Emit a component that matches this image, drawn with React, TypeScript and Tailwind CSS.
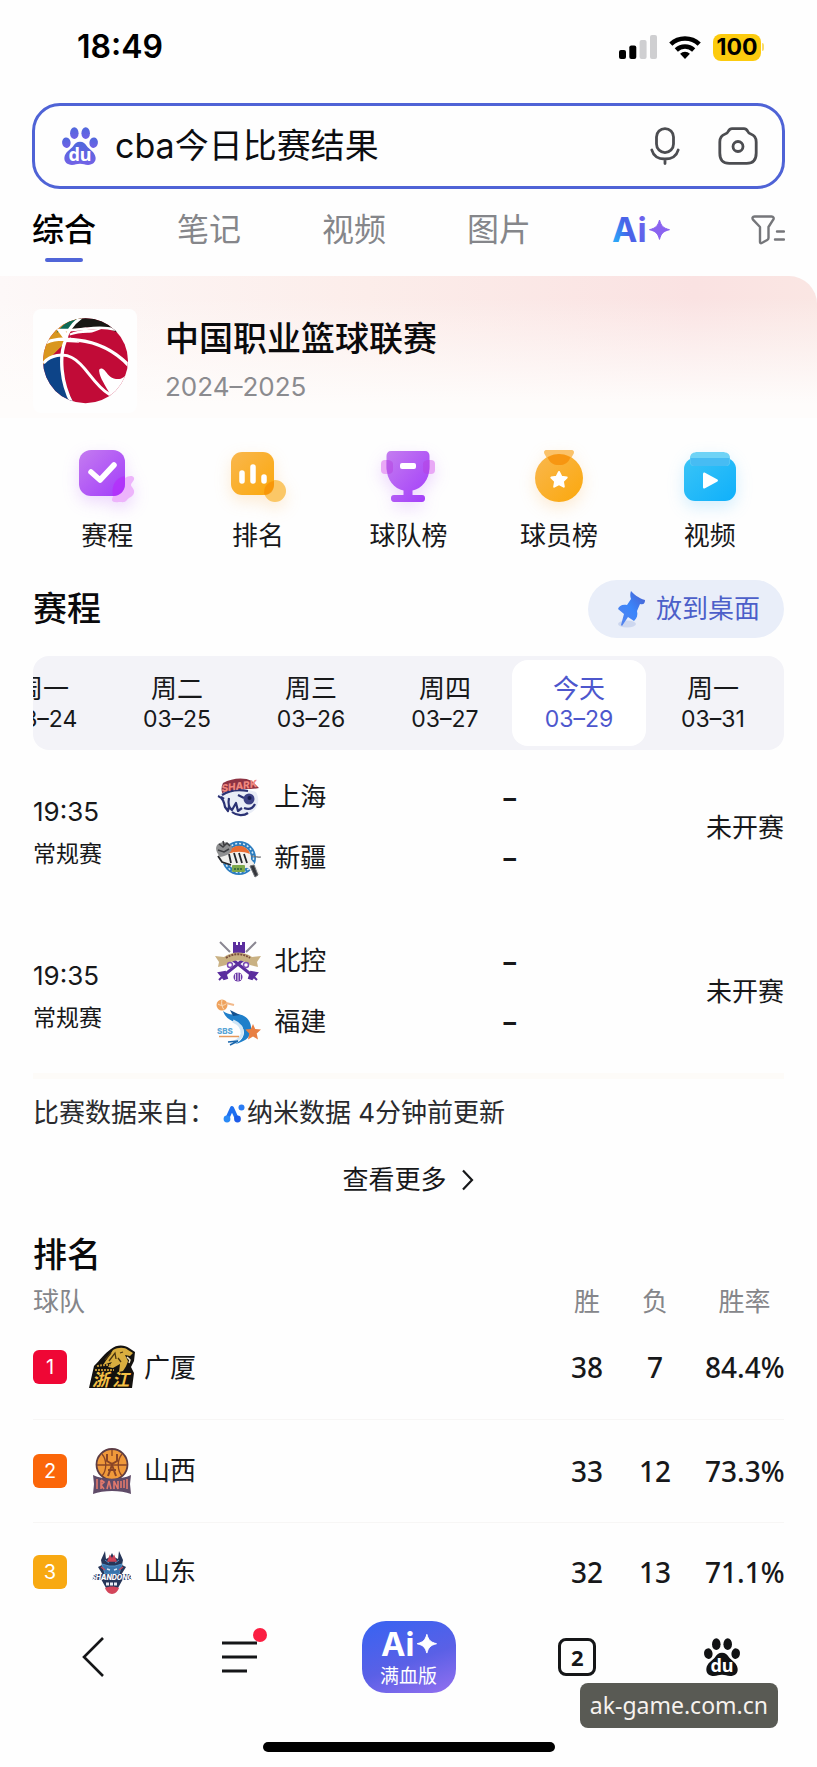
import type { ReactNode } from "react";

const cjk = "font-['Inter','Noto_Sans_CJK_SC',sans-serif]";

/* ---------- shared marks ---------- */

function Paw({ tone, className }: { tone: "color" | "dark"; className: string }) {
  const fill = tone === "color" ? "url(#pawFill)" : "#111214";
  return (
    <svg viewBox="0 0 38 40" className={`overflow-visible ${className}`} aria-hidden="true">
      <defs>
        <linearGradient id="pawFill" x1="0" y1="0" x2="0" y2="1">
          <stop offset="0" stopColor="#4f68dc" />
          <stop offset="1" stopColor="#7262e6" />
        </linearGradient>
      </defs>
      <g fill={fill}>
        <ellipse cx="13" cy="6.500" rx="4.500" ry="6.200" />
        <ellipse cx="25" cy="6.500" rx="4.500" ry="6.200" />
        <ellipse cx="4.600" cy="16.500" rx="4.500" ry="5.600" transform="rotate(-8 4.600 16.500)" />
        <ellipse cx="33.400" cy="16.500" rx="4.500" ry="5.600" transform="rotate(8 33.400 16.500)" />
        <path d="M19 15.500c3.500 0 5.500 2 7.500 5s8.500 5.500 9 12c.3 4.500-3 7.500-8 7.500-3.500 0-5-1.200-8.500-1.200S14 40 10.500 40c-5 0-8.300-3-8-7.500.5-6.500 7-9 9-12s4-5 7.500-5z" />
      </g>
      <text x="19" y="36" textAnchor="middle" fontSize="19" fontWeight="700" fill="#fff" fontFamily="Noto Sans">
        du
      </text>
    </svg>
  );
}

function AiMark({ light, className }: { light?: boolean; className: string }) {
  const fill = light ? "#fff" : "url(#aiFill)";
  return (
    <svg viewBox="0 0 58 30" className={`overflow-visible ${className}`} role="img" aria-label="Ai+">
      <defs>
        <linearGradient id="aiFill" gradientUnits="userSpaceOnUse" x1="0" y1="26" x2="56" y2="6">
          <stop offset="0" stopColor="#25b4fb" />
          <stop offset="0.3" stopColor="#4763e8" />
          <stop offset="1" stopColor="#9a63f2" />
        </linearGradient>
      </defs>
      <text x="0" y="27" fontSize="34" fontWeight="700" fontFamily="Inter" fill={fill}>
        Ai
      </text>
      <path d="M47.500 5c1.700 6 3.500 8 10 9.700-6.500 1.700-8.300 3.700-10 9.700-1.700-6-3.500-8-10-9.700 6.500-1.700 8.300-3.700 10-9.700z" fill={light ? "#fff" : "#8a63f0"} stroke={light ? "#fff" : "#8a63f0"} strokeLinejoin="round" />
    </svg>
  );
}

/* ---------- status bar ---------- */

function StatusBar() {
  return (
    <div className="flex items-center justify-between pt-[27px] pl-[77px] pr-[53px]">
      <span className="text-[32px] font-semibold leading-10 text-black">18:49</span>
      <div className="flex items-center gap-3">
        <svg viewBox="0 0 38 24" className="h-6 w-[38px]" aria-hidden="true">
          <rect x="0" y="15" width="7" height="9" rx="2" />
          <rect x="10.300" y="10.500" width="7" height="13.500" rx="2" />
          <rect x="20.600" y="5" width="7" height="19" rx="2" fill="#cfcfd1" />
          <rect x="31" y="0" width="7" height="24" rx="2" fill="#cfcfd1" />
        </svg>
        <svg viewBox="0 0 32 24" className="h-6 w-8" aria-hidden="true">
          <g fill="none" stroke="#000" strokeWidth="4.600">
            <path d="M1.800 9.200a20.500 20.500 0 0 1 28.400 0" />
            <path d="M7.300 15a12.600 12.600 0 0 1 17.400 0" />
          </g>
          <path d="M16 24l-4.900-5.200a7 7 0 0 1 9.800 0z" />
        </svg>
        <div className="flex items-center gap-px">
          <span className="flex h-[27px] w-12 items-center justify-center rounded-lg bg-[#fccb0e] text-[23px] font-bold leading-7 text-black">
            100
          </span>
          <span className="h-2 w-0.5 rounded-r bg-[#fbdc6a]" />
        </div>
      </div>
    </div>
  );
}

/* ---------- search ---------- */

function SearchBar() {
  return (
    <form className="mx-8 mt-9 flex items-center rounded-[28px] border-[3px] border-[#4f63d6] py-5 pl-[27px] pr-6">
      <Paw tone="color" className="h-[38px] w-9" />
      <input
        aria-label="搜索"
        defaultValue="cba今日比赛结果"
        className="ml-[17px] h-10 min-w-0 flex-1 bg-transparent text-[34px] leading-10 text-[#0c0d10] outline-none"
      />
      <button type="button" aria-label="语音搜索" className="mr-[38px]">
        <svg viewBox="0 0 30 38" className="h-[38px] w-[30px]" fill="none" stroke="#4c4d51" strokeWidth="2.800" strokeLinecap="round">
          <rect x="6.500" y="1.600" width="17" height="24" rx="8.500" />
          <path d="M1.800 23c1.500 5.500 6.200 9 13.200 9s11.700-3.500 13.200-9M15 32v4.500" />
        </svg>
      </button>
      <button type="button" aria-label="拍照搜索">
        <svg viewBox="0 0 40 38" className="h-[38px] w-10" fill="none" stroke="#4c4d51" strokeWidth="2.800" strokeLinejoin="round">
          <path d="M14 1.600h12c2 0 2.700.8 3.500 2.400.8 1.800 1.500 2.400 3.300 3C37 8.400 38.200 11 38.200 15v11c0 7-3 10.400-9.500 10.400H11.300C4.800 36.400 1.800 33 1.800 26V15c0-4 1.200-6.600 5.400-8 1.800-.6 2.500-1.200 3.300-3 .8-1.600 1.500-2.400 3.500-2.400z" />
          <circle cx="20" cy="19.500" r="5" />
        </svg>
      </button>
    </form>
  );
}

function Tabs() {
  return (
    <nav className="flex items-start justify-between px-8 pt-[17px] pb-3.5 text-[32px] leading-[48px] text-[#85868a]">
      <a href="#all" className="flex flex-col items-center gap-1 font-medium text-black">
        综合
        <span className="h-1 w-[38px] rounded-full bg-[#5065d8]" />
      </a>
      <a href="#notes">笔记</a>
      <a href="#video">视频</a>
      <a href="#image">图片</a>
      <a href="#ai" className="flex h-12 items-center">
        <AiMark className="h-[30px] w-[58px]" />
      </a>
      <button type="button" aria-label="筛选" className="flex h-12 items-center">
        <svg viewBox="0 0 34 30" className="h-[30px] w-[34px]" fill="none" stroke="#75767a" strokeWidth="2.400" strokeLinejoin="round" strokeLinecap="round">
          <path d="M3.500 1.500h17c2 0 2.700 1.800 1.700 3.200L17.500 12v11c0 1-.5 1.600-1.300 2l-5.500 3c-1 .5-1.700 0-1.700-1V12L2 4.700C1 3.200 1.500 1.500 3.500 1.500z" />
          <path d="M26 16.500h7M24 24.500h9" />
        </svg>
      </button>
    </nav>
  );
}

/* ---------- league banner ---------- */

function LeagueBall() {
  return (
    <svg viewBox="0 0 254 257" className="h-[86px] w-[85px]" aria-hidden="true">
      <defs>
        <clipPath id="ball">
          <circle cx="127" cy="128" r="127" />
        </clipPath>
      </defs>
      <g clipPath="url(#ball)">
        <rect width="254" height="257" fill="#c10b37" />
        <path d="M0 0h120L72 52 68 72 0 140z" fill="#d9961f" />
        <path d="M40 44C60 18 80 4 114 0L84 34 60 36z" fill="#0e6a56" />
        <path d="M110 0h90l24 44C180 22 130 26 84 36z" fill="#191815" />
        <path d="M0 140C20 116 40 108 58 110c0 60 14 110 36 150H0z" fill="#0d4488" />
        <g fill="none" stroke="#fff" strokeLinecap="round">
          <path d="M112 0C84 20 72 40 66 70 50 110 50 190 90 262" strokeWidth="10" />
          <path d="M-4 80C30 60 60 62 104 66c70 8 116 36 156 80" strokeWidth="10" />
          <path d="M4 132c18-20 56-28 82-14 44 22 60 78 112 110" strokeWidth="9" />
          <path d="M52 36c30 2 54-2 78-4 30-4 60-4 84 2" strokeWidth="8" />
        </g>
        <path d="M80 46c30-12 66-12 96-14-18 6-30 14-42 12-20 0-40 4-54 8zM66 72l44 2-28-16zM70 40L36 28l30 40z" fill="#fff" />
        <path d="M258 148C250 175 235 185 218 182c-18-2-26-17-34-26-8-8-18-6-16 4 2 20 18 40 32 68l60 32z" fill="#fff" />
      </g>
    </svg>
  );
}

function LeagueBanner() {
  return (
    <section className="flex items-center gap-7 rounded-tr-[28px] bg-[linear-gradient(to_bottom,rgba(254,252,251,0)_15%,#fefcfb_90%),linear-gradient(to_right,#fdf8f8,#fcedea_45%,#fae2e2_85%,#fae6e3)] px-[33px] pt-[33px] pb-[5px]">
      <div className="flex size-[104px] shrink-0 items-center justify-center rounded-lg bg-[#fefefe]">
        <LeagueBall />
      </div>
      <div className="flex flex-col gap-2">
        <h1 className="text-[34px] font-medium leading-[44px] text-[#0a0a0c]">中国职业篮球联赛</h1>
        <p className="text-[26px] leading-9 text-[#8b8b8f]">2024–2025</p>
      </div>
    </section>
  );
}

/* ---------- shortcuts ---------- */

function Gradients() {
  return (
    <defs>
      <linearGradient id="gPurple" x1="0" y1="0" x2="1" y2="1">
        <stop offset="0" stopColor="#c47cf0" />
        <stop offset="1" stopColor="#a23cfa" />
      </linearGradient>
      <linearGradient id="gOrange" x1="0" y1="0" x2="1" y2="1">
        <stop offset="0" stopColor="#f9b74e" />
        <stop offset="1" stopColor="#fba80c" />
      </linearGradient>
      <linearGradient id="gBlue" x1="0" y1="0" x2="1" y2="1">
        <stop offset="0" stopColor="#3ac4f6" />
        <stop offset="1" stopColor="#0fb0fb" />
      </linearGradient>
    </defs>
  );
}

const shortcuts: { label: string; glow: string; art: ReactNode }[] = [
  {
    label: "赛程",
    glow: "drop-shadow-[0_6px_8px_rgba(176,80,250,0.22)]",
    art: (
      <>
        <path d="M50 40c3-2 8-3 9 0 1 2-3 5-3 7s4 4 3 8-5 4-7 7-5 2-7 2-8 1-8-2 5-14 13-22z" fill="#edb4fb" />
        <rect x="4" y="12" width="46" height="46" rx="12" fill="url(#gPurple)" />
        <path d="M38 58c-2-10 2-18 12-20v8c0 7-5 12-12 12z" fill="#b52cfb" opacity=".7" />
        <path d="M16 34l9 8 14-15" fill="none" stroke="#fff" strokeWidth="5.500" strokeLinejoin="round" strokeLinecap="round" />
      </>
    ),
  },
  {
    label: "排名",
    glow: "drop-shadow-[0_6px_8px_rgba(250,170,60,0.22)]",
    art: (
      <>
        <circle cx="49" cy="53" r="11" fill="#fbc766" />
        <rect x="5" y="14" width="43" height="43" rx="11" fill="url(#gOrange)" />
        <path d="M38.500 57A11 11 0 0 1 48 43v3c0 7-4 11-9.500 11z" fill="#f79206" opacity=".8" />
        <g stroke="#fff" strokeWidth="5.500" strokeLinecap="round">
          <path d="M16 35v8M27 29v14M38 39v4" />
        </g>
      </>
    ),
  },
  {
    label: "球队榜",
    glow: "drop-shadow-[0_6px_8px_rgba(176,80,250,0.22)]",
    art: (
      <>
        <rect x="5" y="22" width="12" height="14" rx="4" fill="#e9a8f6" />
        <rect x="47" y="22" width="12" height="14" rx="4" fill="#e9a8f6" />
        <path d="M15 13h34c3 0 4.500 2 4.500 5v11c0 13-8 22-17 23.500V57H46c2.500 0 3 1.500 3 3.500S48 64 46 64H18c-2 0-3-1.500-3-3.500s.5-3.500 3-3.500h9.500v-4.500C18.500 51 10.500 42 10.500 29V18c0-3 1.500-5 4.500-5z" fill="url(#gPurple)" />
        <path d="M47 26c0-2 2-4 6.500-4v9c-.5 2-1 3.500-1.500 5-3 0-5-1.500-5-4zM17 26c0-2-2-4-6.500-4v9c.5 2 1 3.500 1.500 5 3 0 5-1.500 5-4z" fill="#b63fe0" opacity=".5" />
        <rect x="24" y="25" width="16" height="6" rx="2" fill="#fff" />
      </>
    ),
  },
  {
    label: "球员榜",
    glow: "drop-shadow-[0_6px_8px_rgba(250,170,60,0.22)]",
    art: (
      <>
        <path d="M20 12h24c3 0 3.500 2 2.500 4L43 22H21l-3.500-6c-1-2-.5-4 2.500-4z" fill="#fbc269" />
        <circle cx="32" cy="40" r="24" fill="url(#gOrange)" />
        <path d="M20.500 19.200a24 24 0 0 1 23 0C41 25 38 27 32 27s-9-2-11.500-7.800z" fill="#f68e08" opacity=".8" />
        <path d="M32 34l2.400 4.800 5.300.8-3.800 3.800.9 5.300-4.800-2.500-4.800 2.500.9-5.300-3.800-3.800 5.300-.8z" fill="#fff" stroke="#fff" strokeWidth="2" strokeLinejoin="round" />
      </>
    ),
  },
  {
    label: "视频",
    glow: "drop-shadow-[0_6px_8px_rgba(60,180,250,0.22)]",
    art: (
      <>
        <rect x="6" y="20" width="52" height="43" rx="11" fill="url(#gBlue)" />
        <path d="M20 14h24c5 0 8 2 8 6v3c0 3-1 5-4 5H16c-3 0-4-2-4-5v-3c0-4 3-6 8-6z" fill="#6fd3f6" />
        <path d="M12.500 20h39c.5 5-.5 8-3.500 8H16c-3 0-4-3-3.500-8z" fill="#27a9f0" opacity=".55" />
        <path d="M25 36v13c0 1.500 1 2 2 1.300l12-6.500c1.300-.7 1.300-1.800 0-2.500l-12-6.600c-1-.6-2 0-2 1.300z" fill="#fff" />
      </>
    ),
  },
];

function Shortcuts() {
  return (
    <nav className="grid grid-cols-5 px-8 pt-5">
      {shortcuts.map((s) => (
        <a key={s.label} href="#" className="flex flex-col items-center gap-4 text-[26px] leading-9 text-[#17181a]">
          <svg viewBox="0 0 64 64" className={`h-16 w-16 overflow-visible ${s.glow}`} aria-hidden="true">
            <Gradients />
            {s.art}
          </svg>
          {s.label}
        </a>
      ))}
    </nav>
  );
}

/* ---------- team crests ---------- */

function Sharks() {
  return (
    <svg viewBox="0 0 48 44" className="h-11 w-12 overflow-visible" aria-hidden="true">
      <path d="M9 8C18 3 30 2 38 6l7 7c-6 1-10 1-16 1L9 20c-2-4-2-8 0-12z" fill="#8e3343" />
      <path d="M4 20c10-5 26-7 38-3 3 5 3 11 0 16-4 6-12 9-20 7-4-1-6-4-7-7l-4-1-2-6z" fill="#e9edf6" />
      <path d="M4 21c5 2 6 6 7 11l3 4 1-5M8 20c6-4 16-6 26-4M15 23c-1 5 0 10 3 12l4-7 2 8 4-3M18 37c5 4 12 4 16 1M30 33c5 2 9 0 11-4M24 20l6 3M10 24l-3-2" fill="none" stroke="#2b3274" strokeWidth="2.200" strokeLinejoin="round" />
      <circle cx="35" cy="24" r="5.500" fill="#3c4184" />
      <circle cx="35.500" cy="23" r="2" fill="#141a4e" />
      <text x="8" y="17" fontSize="10" fontWeight="800" fontStyle="italic" fontFamily="Inter" fill="#f0887e" transform="rotate(-8 8 17)">
        SHARK
      </text>
    </svg>
  );
}

function Tigers() {
  return (
    <svg viewBox="0 0 48 44" className="h-11 w-12" aria-hidden="true">
      <circle cx="25" cy="22" r="17" fill="#2b7cbf" />
      <circle cx="25" cy="22" r="14.500" fill="none" stroke="#d6ebf6" strokeDasharray="2 2" strokeWidth="1.500" />
      <circle cx="25" cy="22" r="12" fill="#f5f1eb" />
      <path d="M14 18a11.500 11.500 0 0 1 22 0c-7-3-15-3-22 0z" fill="#ea6d33" />
      <path d="M4 20c10-4 22-4 32 2l6 8 4 8-3 3-9-9-16-2-10-3z" fill="#f1f0ed" />
      <path d="M4 8c4-3 12-2 14 3 0 6-5 9-12 10-3-4-6-9-2-13z" fill="#8f9091" />
      <path d="M5 8l4 3 4-4 3 3M4 14l6 2 5-3M9 5l1 4" fill="none" stroke="#3c3d40" strokeWidth="1.500" />
      <path d="M15 18l2 9M20 17l3 10M25 17l3 10M30 18l3 9M4 20l4 6 9 3" fill="none" stroke="#24262b" strokeWidth="1.800" />
      <path d="M36 30l5 11 3-2-4-10zM37 20c4 0 6 2 10 1" fill="#34363b" stroke="#6d6f74" strokeWidth="1" />
      <rect x="18" y="29" width="13" height="7" rx="1" fill="#7ca84b" />
      <path d="M20 33h9" stroke="#3d7040" strokeWidth="2" strokeDasharray="2 1" />
    </svg>
  );
}

function Royals() {
  return (
    <svg viewBox="0 0 48 44" className="h-11 w-12" aria-hidden="true">
      <g stroke="#5b2e9e" strokeWidth="3" fill="none">
        <path d="M34 17L9 37M14 17l25 20" />
      </g>
      <path d="M6 3l10 10M42 3l-10 10" stroke="#8a8792" strokeWidth="2" />
      <path d="M5 34l6-1 2 6-3 1zM43 34l-6-1-2 6 3 1zM5 41l5-5M43 41l-5-5" fill="#5b2e9e" stroke="#5b2e9e" strokeWidth="2" />
      <path d="M19 3h3v3h2V3h2v3h2V3h3v11H19z" fill="#5b2e9e" />
      <path d="M1 17l9 1c8-6 20-6 28 0l9-1-4 6 1 5-8-2c-6-6-18-6-24 0l-8 2 1-5z" fill="#c9b183" />
      <path d="M12 19c7-5 17-5 24 0" fill="none" stroke="#7a4e3d" strokeWidth="2" strokeDasharray="2 1" />
      <circle cx="16" cy="26" r="2.500" fill="#fff" stroke="#7c4bb4" strokeWidth="1.500" />
      <circle cx="32" cy="26" r="2.500" fill="#fff" stroke="#7c4bb4" strokeWidth="1.500" />
      <circle cx="24" cy="38" r="4.500" fill="#6d3aa8" />
      <path d="M24 33v9M21.500 35v6M26.500 35v6" stroke="#fff" strokeWidth=".8" />
    </svg>
  );
}

function Sturgeons() {
  return (
    <svg viewBox="0 0 48 48" className="h-12 w-12 overflow-visible" aria-hidden="true">
      <circle cx="8" cy="7" r="5.500" fill="#efa25d" />
      <path d="M4 6c3 2 6 2 9-1M8 1.500c-1 4 0 8 2 10" fill="none" stroke="#fbe0c0" strokeWidth="1" />
      <path d="M12 5l8 2" stroke="#f2b98a" strokeWidth="2" />
      <path d="M9 13c4 3 8 4 14 3 10 1 15 8 14 17-1 7-7 11-16 13 6-3 9-7 9-12-1-6-4-8-9-10-6-2-10-5-12-11z" fill="#1f7fca" />
      <path d="M19 18l-3-6 10 5z" fill="#12508f" />
      <path d="M19 23c7 3 10 7 9 13-1 4-4 6-8 8" fill="none" stroke="#cfe5f5" strokeWidth="3" />
      <path d="M14 44l10-1M16 47l8-4" stroke="#1a67ad" strokeWidth="1.500" />
      <path d="M39 26l2.200 5 5.800.5-4.300 4 1.300 6-5-3-5 3 1.300-6-4-4 5.500-.5z" fill="#e87f43" />
      <text x="3" y="36" fontSize="8" fontWeight="800" fontFamily="Inter" fill="#5aa5d6">
        SBS
      </text>
      <path d="M5 38.500h20" stroke="#e59a5c" strokeWidth="1.500" />
    </svg>
  );
}

function Lions() {
  return (
    <svg viewBox="0 0 46 44" className="h-11 w-[46px] overflow-visible" aria-hidden="true">
      <path d="M0 43l5-22C11 15 16 8 22 4c6-5 14-4 18-1l6 4-1 9-3 6 3 6-2 15z" fill="#14120f" />
      <path d="M24 5c5-3 12-3 15 0l5 3-3 3-5-1 3 6c-1 4-3 7-5 10l-4 1 1-8-7 4-5-1 4-5-9 3z" fill="#d9ae3f" />
      <path d="M16 15l6-7M20 16l6-8 1 6M31 8l3-1M29 13l3 4" stroke="#4a3510" strokeWidth="1.300" fill="none" />
      <path d="M38 12l3 3-1 3" stroke="#f1e5c6" strokeWidth="1.500" fill="none" />
      <path d="M8 21c5-1 10-1 14-1M6 25h19" fill="none" stroke="#b98f32" strokeWidth="2" strokeDasharray="2 1" />
      <text x="3" y="41" fontSize="17" fontWeight="700" fontStyle="italic" fontFamily="Noto Sans CJK SC" fill="#f5c045">
        浙
      </text>
      <text x="23" y="41" fontSize="17" fontWeight="700" fontStyle="italic" fontFamily="Noto Sans CJK SC" fill="#f5c045">
        江
      </text>
    </svg>
  );
}

function Loongs() {
  return (
    <svg viewBox="0 0 38 46" className="h-[46px] w-[38px]" aria-hidden="true">
      <circle cx="19" cy="16.500" r="15.500" fill="#f0993a" stroke="#5c3d45" strokeWidth="1.800" />
      <g fill="none" stroke="#8a4526" strokeWidth="1.300">
        <path d="M4 17h30M9 6c5 6 5 16 0 22M29 6c-5 6-5 16 0 22M19 2v6" />
        <path d="M14 6v7l5 3 5-3V6M15 28l4-11 4 11M15 22h8" strokeWidth="2" />
      </g>
      <path d="M0 27c10 5 28 5 38 0l-1 9 1 10c-10-4-28-4-38 0l1-10z" fill="#5f4b68" />
      <path d="M4 31v10M8 32v9M8 32l3 2-3 3 3 4M14 41l2-8 2 8M21 41v-8l4 8v-8M28 33v7M31 32v8M34 31v10" fill="none" stroke="#e2786c" strokeWidth="1.600" />
    </svg>
  );
}

function Heroes() {
  return (
    <svg viewBox="0 0 40 44" className="h-11 w-10 overflow-visible" aria-hidden="true">
      <path d="M13 1l1 8 4-2 2-4 2 4 4 2 1-8 4 9-1 5 4 2-5 8 2 4-5 9-6 5-6-5-5-9 2-4-5-8 4-2-1-5z" fill="#263659" />
      <path d="M10 14l7 2h6l7-2-3 10H13zM13 10l4 3M27 10l-4 3" fill="#3a74ac" stroke="#4f8fc4" strokeWidth="1" />
      <path d="M18 6l2 3 2-3 2 5h-8zM9 17l4 3M31 17l-4 3" fill="#d24458" stroke="#c84358" strokeWidth="1.300" />
      <path d="M15 19l3 1M25 19l-3 1" stroke="#cfe3f3" strokeWidth="1.400" />
      <path d="M2 24h36l2 6H0z" fill="#33426b" />
      <text x="20" y="30" textAnchor="middle" fontSize="7" fontWeight="800" fontStyle="italic" fontFamily="Inter" fill="#fff">
        SHANDONG
      </text>
      <path d="M14 34h12" stroke="#e9edf5" strokeWidth="3" strokeDasharray="3 1" />
      <path d="M13 38c4-2 10-2 14 0-1 3-4 6-7 6s-6-3-7-6z" fill="#d3455a" />
    </svg>
  );
}

/* ---------- schedule ---------- */

const days = [
  { day: "周一", date: "03–24" },
  { day: "周二", date: "03–25" },
  { day: "周三", date: "03–26" },
  { day: "周四", date: "03–27" },
  { day: "今天", date: "03–29", active: true },
  { day: "周一", date: "03–31" },
];

const matches = [
  { time: "19:35", teams: [{ name: "上海", crest: <Sharks /> }, { name: "新疆", crest: <Tigers /> }] },
  { time: "19:35", teams: [{ name: "北控", crest: <Royals /> }, { name: "福建", crest: <Sturgeons /> }] },
];

function Schedule() {
  return (
    <section className="px-[33px]">
      <div className="mt-[26px] flex items-center justify-between">
        <h2 className="text-[34px] font-medium leading-[44px] text-[#0a0a0c]">赛程</h2>
        <button type="button" className="flex h-[58px] items-center gap-2 rounded-full bg-[#e9eef9] pl-7 pr-6 text-[26px] leading-9 text-[#4c5fc9]">
          <svg viewBox="0 0 32 38" className="h-[38px] w-8" aria-hidden="true">
            <defs>
              <linearGradient id="pin" x1="1" y1="0" x2="0" y2="1">
                <stop offset="0" stopColor="#4b5ccb" />
                <stop offset="0.5" stopColor="#3b86fb" />
                <stop offset="1" stopColor="#5a83ea" />
              </linearGradient>
            </defs>
            <ellipse cx="11" cy="34" rx="9" ry="3.500" fill="#cdd7ef" />
            <path d="M15 1c3 3 7 7 14 9 0 3-1 5-5 4l-3 7c1 4 0 7-3 10l-6-4-6 9-1-1 3-11-6-5c1-3 4-5 9-4l4-6c-1-3-1-5 0-8z" fill="url(#pin)" />
          </svg>
          放到桌面
        </button>
      </div>

      <div className="mt-[18px] flex justify-end overflow-hidden rounded-2xl bg-[#f3f3f8] p-1">
        {days.map((d) => (
          <button
            key={d.date}
            type="button"
            className={
              d.active
                ? "w-[134px] shrink-0 rounded-2xl bg-white py-[13px] text-[#4d57cd]"
                : "w-[134px] shrink-0 rounded-2xl py-[13px] text-[#17181a]"
            }
          >
            <span className="block text-[26px] leading-8">{d.day}</span>
            <span className="block text-[23px] leading-7">{d.date}</span>
          </button>
        ))}
      </div>

      <div className="flex flex-col gap-10 pt-[15px] pb-5">
        {matches.map((m) => (
          <div key={m.teams[0].name} className="grid grid-cols-[24%_38%_1fr_auto] items-center text-[26px] text-[#17181a]">
            <div className="flex flex-col pt-3">
              <span className="text-[26px] leading-[42px]">{m.time}</span>
              <span className="text-[23px] leading-[42px]">常规赛</span>
            </div>
            <div className="pl-px">
              {m.teams.map((t) => (
                <div key={t.name} className="flex h-[61px] items-center gap-3">
                  {t.crest}
                  {t.name}
                </div>
              ))}
            </div>
            <div className="pt-1 pl-[5px] text-[25px] font-bold">
              {m.teams.map((t) => (
                <div key={t.name} className="flex h-[60px] items-center">
                  –
                </div>
              ))}
            </div>
            <span>未开赛</span>
          </div>
        ))}
      </div>

      <hr className="h-1.5 border-0 bg-[#fdfbf8]" />

      <p className="mt-3.5 flex items-center text-[26px] leading-10 text-[#2a2b2e]">
        比赛数据来自：
        <svg viewBox="0 0 22 20" className="ml-2 mr-0.5 h-5 w-[22px]" aria-hidden="true">
          <path d="M4 16L9 5l5 11" fill="none" stroke="#1f6ff0" strokeWidth="4" strokeLinecap="round" strokeLinejoin="round" />
          <circle cx="4" cy="16" r="3.400" fill="#2b8af6" />
          <circle cx="14.500" cy="16" r="3.400" fill="#1d5ce8" />
          <circle cx="18.500" cy="4.500" r="3" fill="#2a7cf4" />
        </svg>
        纳米数据 4分钟前更新
      </p>

      <a href="#more" className="mt-[27px] flex items-center justify-center gap-3.5 text-[26px] leading-10 text-[#17181a]">
        查看更多
        <svg viewBox="0 0 14 22" className="h-[22px] w-3.5" fill="none" stroke="#17181a" strokeWidth="2.200" aria-hidden="true">
          <path d="M2 1.500L11 11l-9 9.500" />
        </svg>
      </a>
    </section>
  );
}

/* ---------- standings ---------- */

const standings = [
  { name: "广厦", crest: <Lions />, badge: "bg-[#ef0735]", win: 38, loss: 7, rate: "84.4%" },
  { name: "山西", crest: <Loongs />, badge: "bg-[#fb6609]", win: 33, loss: 12, rate: "73.3%" },
  { name: "山东", crest: <Heroes />, badge: "bg-[#f8a912]", win: 32, loss: 13, rate: "71.1%" },
];

function Standings() {
  return (
    <section className="px-[33px] pt-[33px]">
      <h2 className="text-[34px] font-medium leading-[44px] text-[#0a0a0c]">排名</h2>
      <table className="mt-[11px] w-full table-fixed border-collapse text-[26px]">
        <thead>
          <tr className="leading-7 text-[#85868a]">
            <th className="text-left font-normal">球队</th>
            <th className="w-[68px] font-normal">胜</th>
            <th className="w-[68px] font-normal">负</th>
            <th className="w-[95px] pl-4 font-normal">胜率</th>
          </tr>
        </thead>
        <tbody className="text-[#17181a]">
          {standings.map((s, i) => (
            <tr key={s.name} className="h-[103px] border-b border-[#f7f6f5] last:h-[99px] last:border-0">
              <td>
                <div className="flex items-center">
                  <span className={`flex size-[34px] items-center justify-center rounded-md text-[20px] leading-none text-white ${s.badge}`}>
                    {i + 1}
                  </span>
                  <span className="ml-[21px] mr-2 flex w-12 justify-center">{s.crest}</span>
                  {s.name}
                </div>
              </td>
              <td className="text-center font-['Noto_Sans'] text-[28px] font-medium">{s.win}</td>
              <td className="text-center font-['Noto_Sans'] text-[28px] font-medium">{s.loss}</td>
              <td className="pl-4 text-center font-['Noto_Sans'] text-[28px] font-medium">{s.rate}</td>
            </tr>
          ))}
        </tbody>
      </table>
    </section>
  );
}

/* ---------- bottom bar ---------- */

function BottomBar() {
  return (
    <footer className="relative pb-[15px]">
      <nav className="flex items-center justify-between pr-[76px] pl-20">
        <button type="button" aria-label="返回" className="w-[38px]">
          <svg viewBox="0 0 38 42" className="h-[42px] w-[38px]" fill="none" stroke="#151618" strokeWidth="2.600">
            <path d="M23 2L4 21l19 19" />
          </svg>
        </button>
        <button type="button" aria-label="菜单" className="relative w-[38px]">
          <svg viewBox="0 0 38 42" className="h-[42px] w-[38px]" stroke="#151618" strokeWidth="3">
            <path d="M1 7h35M1 21h35M1 35h25" />
          </svg>
          <span className="absolute -top-2 -right-2 size-3.5 rounded-full bg-[#fb1f42]" />
        </button>
        <button
          type="button"
          className="flex h-[72px] w-[94px] flex-col items-center rounded-[24px] bg-[linear-gradient(160deg,#3d63f0_10%,#5a60e6_55%,#9470f0)] pt-2 text-[19px] leading-6 text-white"
        >
          <AiMark light className="h-[30px] w-14" />
          <span className="pt-1.5">满血版</span>
        </button>
        <button type="button" className="flex size-[38px] items-center justify-center rounded-lg border-[3px] border-[#151618] font-['Noto_Sans'] text-[22px] font-bold leading-none text-[#151618]">
          2
        </button>
        <button type="button" aria-label="主页" className="flex w-[42px] justify-end">
          <Paw tone="dark" className="h-[38px] w-[38px]" />
        </button>
      </nav>
      <div className="mx-auto mt-[49px] h-2.5 w-[292px] rounded-full bg-black" />
      <span className="absolute right-[39px] bottom-[39px] rounded-lg bg-[#595a54] px-2.5 py-1.5 font-['Noto_Sans'] text-[23px] leading-[33px] text-[#f6f2ee]">
        ak-game.com.cn
      </span>
    </footer>
  );
}

export default function App() {
  return (
    <main className={`flex min-h-screen flex-col bg-[#fefefe] ${cjk}`}>
      <StatusBar />
      <SearchBar />
      <Tabs />
      <LeagueBanner />
      <Shortcuts />
      <Schedule />
      <Standings />
      <BottomBar />
    </main>
  );
}
